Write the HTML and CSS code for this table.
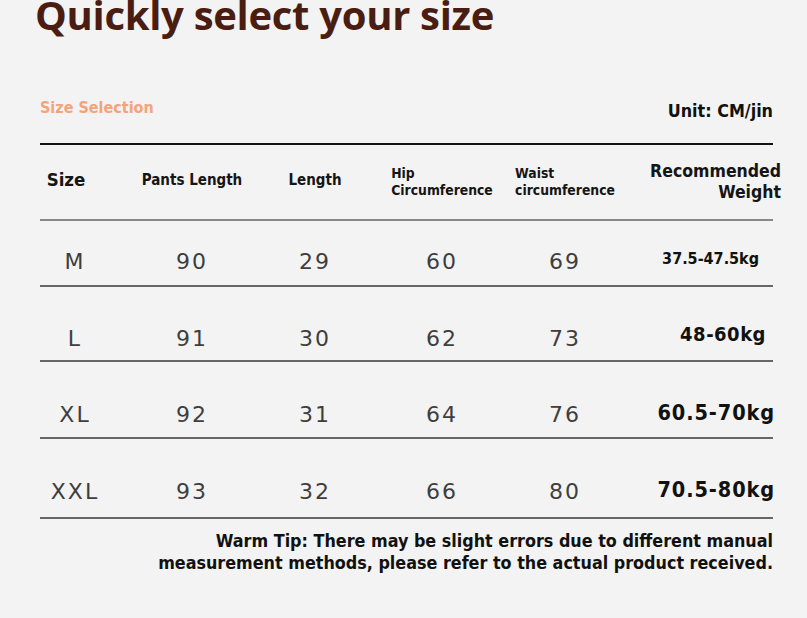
FILE: index.html
```html
<!DOCTYPE html>
<html lang="en">
<head>
<meta charset="utf-8">
<title>Quickly select your size</title>
<link rel="stylesheet" href="styles.css">
</head>
<body>
<main class="page">
  <h1 class="title">Quickly select your size</h1>
  <div class="topbar">
    <span class="sel">Size Selection</span>
    <span class="unit">Unit: CM/jin</span>
  </div>
  <div class="table">
    <div class="row head">
      <div class="c c1"><span class="h h-size">Size</span></div>
      <div class="c c2"><span class="h">Pants Length</span></div>
      <div class="c c3"><span class="h">Length</span></div>
      <div class="c c4"><span class="h small">Hip<br>Circumference</span></div>
      <div class="c c5"><span class="h small">Waist<br>circumference</span></div>
      <div class="c c6"><span class="h rec">Recommended<br>Weight</span></div>
    </div>
    <div class="row data r1">
      <div class="c c1">M</div><div class="c c2">90</div><div class="c c3">29</div><div class="c c4">60</div><div class="c c5">69</div>
      <div class="c c6"><span class="w w1">37.5-47.5kg</span></div>
    </div>
    <div class="row data r2">
      <div class="c c1">L</div><div class="c c2">91</div><div class="c c3">30</div><div class="c c4">62</div><div class="c c5">73</div>
      <div class="c c6"><span class="w w2">48-60kg</span></div>
    </div>
    <div class="row data r3">
      <div class="c c1">XL</div><div class="c c2">92</div><div class="c c3">31</div><div class="c c4">64</div><div class="c c5">76</div>
      <div class="c c6"><span class="w w3">60.5-70kg</span></div>
    </div>
    <div class="row data r4">
      <div class="c c1">XXL</div><div class="c c2">93</div><div class="c c3">32</div><div class="c c4">66</div><div class="c c5">80</div>
      <div class="c c6"><span class="w w4">70.5-80kg</span></div>
    </div>
  </div>
  <p class="tip">Warm Tip: There may be slight errors due to different manual<br>measurement methods, please refer to the actual product received.</p>
</main>
</body>
</html>
```
FILE: styles.css
```css
html, body { margin: 0; padding: 0; }
body {
  background: #f3f3f3;
  width: 807px;
  height: 618px;
  overflow: hidden;
  font-family: "DejaVu Sans Condensed", "DejaVu Sans", sans-serif;
}
.page { padding: 0 34px 0 40px; }
.title {
  margin: 0 0 0 -5px;
  font-family: "Open Sans", sans-serif;
  font-weight: 700;
  font-size: 40px;
  line-height: 30px;
  color: #4a1d12;
  letter-spacing: -0.3px;
  white-space: nowrap;
}
.topbar {
  display: flex;
  justify-content: space-between;
  align-items: center;
  margin-top: 66px;
  height: 28px;
  border-bottom: 2px solid #141414;
  padding-bottom: 19px;
}
.sel { color: #f5a379; font-weight: 700; font-size: 16px; margin-top: -6px; }
.unit { color: #111; font-weight: 700; font-size: 17.8px; }
.row {
  display: grid;
  grid-template-columns: 70px 164px 82px 172px 74px 171px;
  border-bottom: 2px solid #666;
}
.head { height: 74px; align-items: center; border-bottom-color: #888; }
.head .c { display: flex; justify-content: center; }
.h { text-align: left; font-weight: 700; font-size: 15px; color: #151515; line-height: 18px; margin-bottom: 4px; }
.h-size { font-size: 18.5px; margin-left: -18px; }
.small { font-size: 13.8px; line-height: 17px; margin-bottom: 0; }
.head .c6 { justify-content: flex-end; }
.rec { text-align: right; font-size: 17.5px; line-height: 21px; margin-right: -8px; margin-bottom: 0; white-space: nowrap; }
.data { align-items: end; color: #3e3e3e; }
.data .c {
  text-align: center;
  font-family: "DejaVu Sans", sans-serif;
  font-size: 22px;
  line-height: 26px;
  letter-spacing: 2px;
}
.data .c6 {
  display: flex;
  justify-content: flex-end;
  align-items: center;
  height: 26px;
  letter-spacing: 0;
}
.r1 { height: 54px; padding-bottom: 10px; }
.r2 { height: 65px; padding-bottom: 8px; }
.r3 { height: 66px; padding-bottom: 9px; }
.r4 { height: 66px; padding-bottom: 12px; }
.w { display: block; line-height: 1; font-weight: 700; color: #111; font-family: "DejaVu Sans Condensed", "DejaVu Sans", sans-serif; white-space: nowrap; }
.w1 { font-size: 16px; margin-right: 14px; margin-bottom: 6px; }
.w2 { font-size: 20px; letter-spacing: 0.5px; margin-right: 7px; margin-bottom: 10px; }
.w3 { font-size: 21.5px; letter-spacing: 0.9px; margin-right: -2px; margin-bottom: 4px; }
.w4 { font-size: 21.5px; letter-spacing: 0.9px; margin-right: -2px; margin-bottom: 4px; }
.tip {
  margin: 11px 0 0;
  text-align: right;
  font-weight: 700;
  font-size: 17.8px;
  line-height: 22px;
  color: #111;
}
```
